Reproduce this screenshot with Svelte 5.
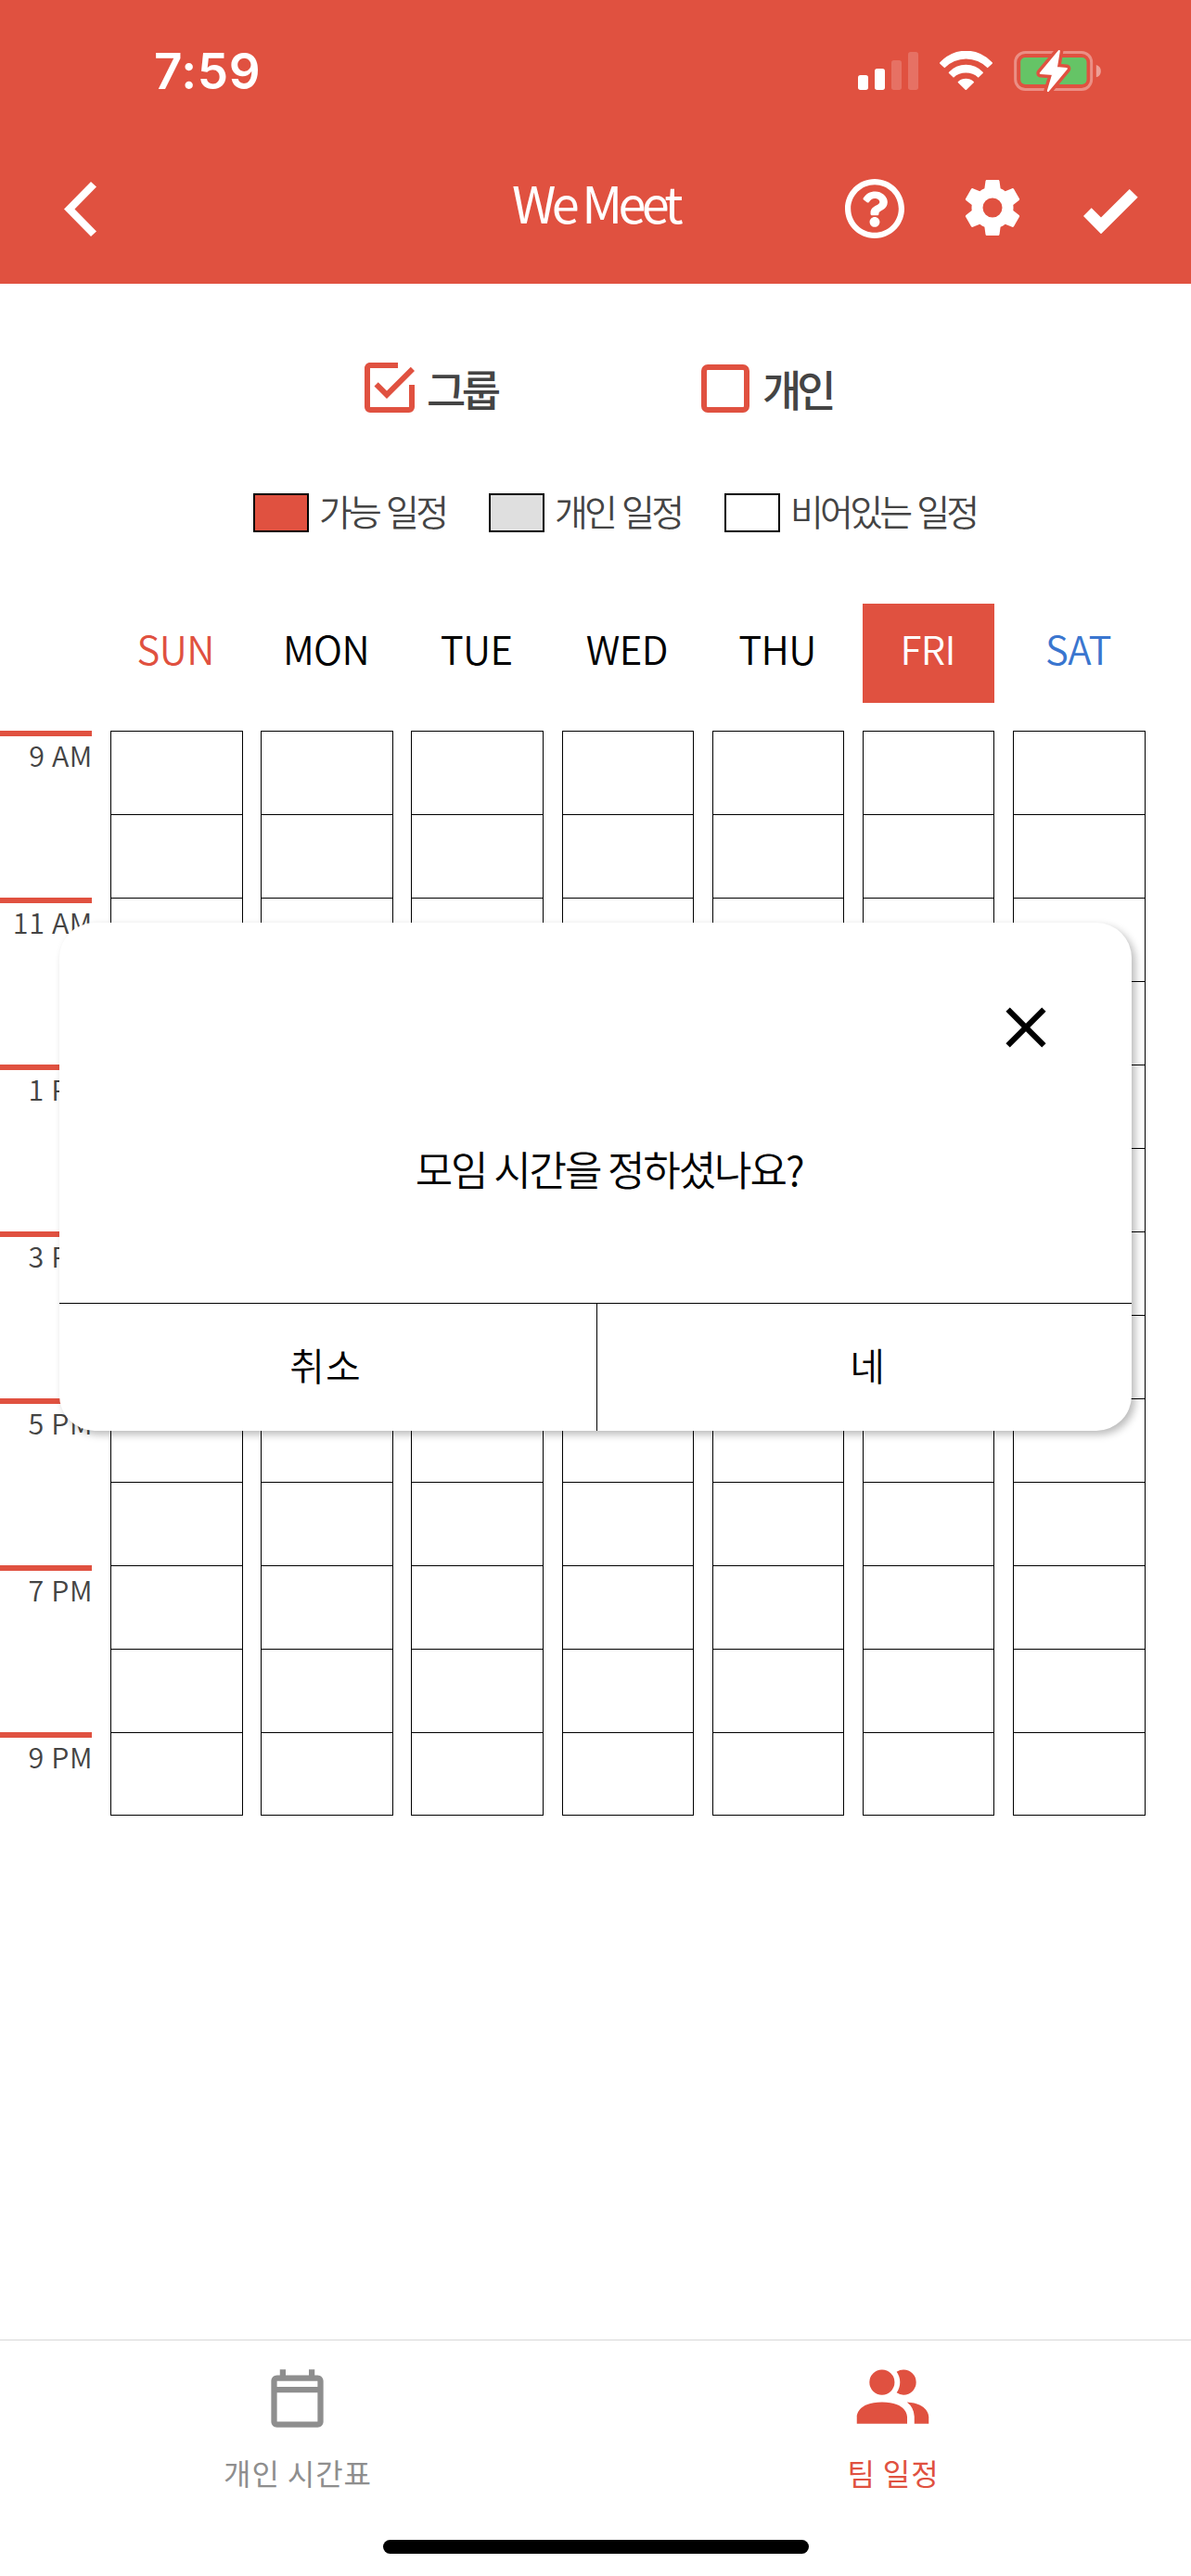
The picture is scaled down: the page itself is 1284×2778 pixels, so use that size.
<script>
  const days = [
    { name: 'SUN', tone: 'sun' },
    { name: 'MON', tone: '' },
    { name: 'TUE', tone: '' },
    { name: 'WED', tone: '' },
    { name: 'THU', tone: '' },
    { name: 'FRI', tone: 'today' },
    { name: 'SAT', tone: 'sat' }
  ];
  const hours = ['9 AM', '11 AM', '1 PM', '3 PM', '5 PM', '7 PM', '9 PM'];
  const slots = Array.from({ length: 13 }, (_, i) => i);
  const legend = [
    { label: '가능 일정', kind: 'open' },
    { label: '개인 일정', kind: 'mine' },
    { label: '비어있는 일정', kind: 'empty' }
  ];
</script>

<div class="screen">
  <header>
    <div class="status">
      <span class="clock">7:59</span>
      <div class="indicators">
        <svg class="signal" viewBox="60 45 195 123" fill="#fff">
          <rect x="60" y="120" width="33" height="48" rx="8" />
          <rect x="114" y="99" width="33" height="69" rx="8" />
          <rect x="168" y="72" width="33" height="96" rx="8" opacity=".19" />
          <rect x="222" y="45" width="33" height="123" rx="8" opacity=".19" />
        </svg>
        <svg class="wifi" viewBox="324 42 171 126" fill="#fff">
          <path d="M325 79A113 113 0 0 1 494 79Q496 81 494 83L479 97A97 97 0 0 0 340 97L325 83Q323 81 325 79Z" />
          <path d="M354 110A75 75 0 0 1 464 110Q466 112 464 114L449 128A60 60 0 0 0 369 128L354 114Q352 112 354 110Z" />
          <path d="M384 141A37 37 0 0 1 434 141Q436 143 434 145L411 167Q409 169 407 167L384 145Q382 143 384 141Z" />
        </svg>
        <svg class="battery" viewBox="564 39 281 135">
          <rect x="568.5" y="46.500" width="246" height="120" rx="32" fill="none" stroke="#fff" stroke-opacity=".36" stroke-width="9" />
          <path d="M830 87Q845 92 845 107T830 127Z" fill="#fff" fill-opacity=".45" />
          <rect x="585" y="63" width="214" height="87" rx="15" fill="#65c466" />
          <path d="M710 42L650 114L690 117L674 171L734 99L701 96Z" fill="#e05140" stroke="#e05140" stroke-width="27" stroke-linejoin="round" />
          <path d="M710 42L650 114L690 117L674 171L734 99L701 96Z" fill="#fff" stroke="#fff" stroke-width="6" stroke-linejoin="round" />
        </svg>
      </div>
    </div>
    <nav>
      <svg class="back" viewBox="0 0 35 59" fill="#fff"><path d="M0 29.500L29 0L35 5.500L11.500 29.500L35 53.500L29 59Z" /></svg>
      <h1>We Meet</h1>
      <div class="actions">
        <svg class="help" viewBox="8 8 496 496" fill="#fff"><path d="M256 8C119.043 8 8 119.083 8 256c0 136.997 111.043 248 248 248s248-111.003 248-248C504 119.083 392.957 8 256 8zm0 448c-110.532 0-200-89.431-200-200 0-110.495 89.472-200 200-200 110.491 0 200 89.471 200 200 0 110.530-89.431 200-200 200zm107.244-255.200c0 67.052-72.421 68.084-72.421 92.863V300c0 6.627-5.373 12-12 12h-45.647c-6.627 0-12-5.373-12-12v-8.659c0-35.745 27.100-50.034 47.579-61.516 17.561-9.845 28.324-16.541 28.324-29.579 0-17.246-21.999-28.693-39.784-28.693-23.189 0-33.894 10.977-48.942 29.969-4.057 5.120-11.460 6.071-16.666 2.124l-27.824-21.098c-5.107-3.872-6.251-11.066-2.644-16.363C184.846 131.491 214.940 112 261.794 112c49.071 0 101.450 38.304 101.450 88.800zM298 368c0 23.159-18.841 42-42 42s-42-18.841-42-42 18.841-42 42-42 42 18.841 42 42z" /></svg>
        <svg class="cog" viewBox="0 0 24 24" fill="#fff"><path d="M12,15.500A3.500,3.500 0 0,1 8.500,12A3.500,3.500 0 0,1 12,8.500A3.500,3.500 0 0,1 15.500,12A3.500,3.500 0 0,1 12,15.500M19.430,12.970C19.470,12.650 19.500,12.330 19.500,12C19.500,11.670 19.470,11.340 19.430,11L21.540,9.370C21.730,9.220 21.780,8.950 21.660,8.730L19.660,5.270C19.540,5.050 19.270,4.960 19.050,5.050L16.560,6.050C16.040,5.660 15.500,5.320 14.870,5.070L14.500,2.420C14.460,2.180 14.250,2 14,2H10C9.750,2 9.540,2.180 9.500,2.420L9.130,5.070C8.500,5.320 7.960,5.660 7.440,6.050L4.950,5.050C4.730,4.960 4.460,5.050 4.340,5.270L2.340,8.730C2.210,8.950 2.270,9.220 2.460,9.370L4.570,11C4.530,11.340 4.500,11.670 4.500,12C4.500,12.330 4.530,12.650 4.570,12.970L2.460,14.630C2.270,14.780 2.210,15.050 2.340,15.270L4.340,18.730C4.460,18.950 4.730,19.030 4.950,18.950L7.440,17.940C7.960,18.340 8.500,18.680 9.130,18.930L9.500,21.580C9.540,21.820 9.750,22 10,22H14C14.250,22 14.460,21.820 14.500,21.580L14.870,18.930C15.500,18.670 16.040,18.340 16.560,17.940L19.050,18.950C19.270,19.030 19.540,18.950 19.660,18.730L21.660,15.270C21.780,15.050 21.730,14.780 21.540,14.630L19.430,12.970Z" /></svg>
        <svg class="done" viewBox="0 0 59 48" fill="#fff"><path d="M0 29L8.700 20.300L19 30.600L49.700 0L58.700 8.800L19 48.300Z" /></svg>
      </div>
    </nav>
  </header>

  <main>
    <div class="filters">
      <div class="filter group">
        <svg viewBox="0 0 24 24" fill="#e05140"><path d="M19,19H5V5H15V3H5C3.890,3 3,3.890 3,5V19A2,2 0 0,0 5,21H19A2,2 0 0,0 21,19V11H19M7.910,10.080L6.500,11.500L11,16L21,6L19.590,4.580L11,13.170L7.910,10.080Z" /></svg>
        <span>그룹</span>
      </div>
      <div class="filter personal">
        <i></i>
        <span>개인</span>
      </div>
    </div>

    <div class="legend">
      {#each legend as item}
        <div class="key"><i class={item.kind}></i><span>{item.label}</span></div>
      {/each}
    </div>

    <div class="days">
      {#each days as day}
        <div class="day {day.tone}">{day.name}</div>
      {/each}
    </div>

    <div class="schedule">
      <div class="hours">
        {#each hours as hour}
          <div class="hour"><span>{hour}</span></div>
        {/each}
      </div>
      <div class="columns">
        {#each days as day (day.name)}
          <div class="column">
            {#each slots as slot (slot)}<div class="slot"></div>{/each}
          </div>
        {/each}
      </div>
    </div>
  </main>

  <footer>
    <div class="tab">
      <div class="icon">
        <svg class="calendar" viewBox="0 0 24 24" fill="#8e8e8e"><path d="M19 3h-1V1h-2v2H8V1H6v2H5c-1.100 0-2 .9-2 2v14c0 1.100.9 2 2 2h14c1.100 0 2-.9 2-2V5c0-1.100-.9-2-2-2zm0 16H5V9h14v10zm0-12H5V5h14v2z" /></svg>
      </div>
      <span>개인 시간표</span>
    </div>
    <div class="tab active">
      <div class="icon">
        <svg class="people" viewBox="0 0 24 24" fill="#e05140"><path d="M16 17V19H2V17S2 13 9 13 16 17 16 17M12.500 7.500A3.500 3.500 0 1 0 9 11A3.500 3.500 0 0 0 12.500 7.500M15.940 13A5.320 5.320 0 0 1 18 17V19H22V17S22 13.370 15.940 13M15 4A3.390 3.390 0 0 0 13.070 4.590A5 5 0 0 1 13.070 10.410A3.390 3.390 0 0 0 15 11A3.500 3.500 0 0 0 15 4Z" /></svg>
      </div>
      <span>팀 일정</span>
    </div>
  </footer>
  <div class="home"></div>

  <div class="modal">
    <div class="body">
      <svg class="close" viewBox="0 0 24 24"><path d="M19,6.410L17.590,5L12,10.590L6.410,5L5,6.410L10.590,12L5,17.590L6.410,19L12,13.410L17.590,19L19,17.590L13.410,12L19,6.410Z" /></svg>
      <p>모임 시간을 정하셨나요?</p>
    </div>
    <div class="buttons">
      <button>취소</button>
      <button>네</button>
    </div>
  </div>
</div>

<style>
  :global(body) { background: #fff; }
  .screen {
    position: relative;
    display: flex;
    flex-direction: column;
    width: 1284px;
    height: 2778px;
    overflow: hidden;
    background: #fff;
    color: #000;
    font-family: 'Noto Sans CJK KR', sans-serif;
    box-sizing: border-box;
  }
  .screen :global(*) { box-sizing: border-box; }
  svg { display: block; flex: none; }
  span, h1, p { white-space: nowrap; }

  header { height: 306px; flex: none; background: #e05140; color: #fff; }
  .status {
    display: flex;
    justify-content: space-between;
    align-items: center;
    height: 144px;
    padding: 8px 97px 0 166px;
  }
  .clock { padding-top: 1px; font: 600 53px/60px Inter, sans-serif; letter-spacing: 0.6px; }
  .indicators { display: flex; align-items: center; gap: 23px; }
  .signal { width: 65px; height: 41px; }
  .wifi { width: 57px; height: 42px; }
  .battery { width: 94px; height: 45px; }
  nav {
    display: grid;
    grid-template-columns: 1fr auto 1fr;
    align-items: center;
    height: 162px;
    padding: 0 57px 0 69px;
  }
  .back { width: 35px; height: 59px; }
  h1 {
    margin: 0 12px 0 0;
    padding-bottom: 14px;
    font-size: 54px;
    font-weight: 400;
    line-height: 60px;
    letter-spacing: -4.7px;
  }
  .actions { display: flex; align-items: center; justify-content: flex-end; }
  .help { width: 64px; height: 64px; margin-right: 59px; }
  .cog { width: 72px; height: 72px; margin: 0 62px 2px 0; }
  .done { width: 59px; height: 48px; margin-top: 6px; }

  main { flex: 1; }
  .filters { display: flex; height: 72px; margin-top: 76px; padding-left: 384px; }
  .filter {
    display: flex;
    align-items: center;
    width: 372px;
    color: #444;
    font-size: 46px;
    font-weight: 500;
    letter-spacing: -4.5px;
    line-height: 70px;
  }
  .filter svg { width: 72px; height: 72px; margin-right: 4px; }
  .filter i { width: 52px; height: 52px; margin: 2px 14px 0 0; border: 6px solid #e05140; border-radius: 7px; }
  .personal { letter-spacing: -5px; }

  .legend { display: flex; height: 42px; margin-top: 78px; padding-left: 273px; }
  .key { display: flex; align-items: center; width: 254px; }
  .key i { width: 60px; height: 42px; margin-right: 11px; border: 2px solid #000; flex: none; }
  .key span { padding-bottom: 6px; color: #444; font-size: 39px; font-weight: 350; line-height: 42px; letter-spacing: -3.8px; word-spacing: 3px; }
  .open { background: #e05140; }
  .mine { background: #dfdfdf; }

  .days { display: grid; grid-template-columns: repeat(7, 142.6px); gap: 19.6px; margin-top: 77px; padding-left: 118.95px; }
  .day { height: 107px; padding-right: 2px; font-size: 42px; font-weight: 350; line-height: 95px; letter-spacing: -0.6px; text-align: center; }
  .sun { color: #e05140; }
  .sat { color: #3a76cf; }
  .today { background: #e05140; color: #fff; }

  .schedule { display: flex; margin-top: 30px; }
  .hours { width: 99px; margin-right: 19.95px; }
  .hour {
    display: flex;
    justify-content: flex-end;
    height: 180px;
    border-top: 6px solid #e05140;
    color: #444;
  }
  .hour:last-child { height: 90px; }
  .hour span { font-size: 30.5px; font-weight: 330; line-height: 40px; letter-spacing: 0.6px; margin-right: -1px; }
  .columns { display: grid; grid-template-columns: repeat(7, 142.6px); gap: 19.6px; }
  .column { height: 1170px; border: 1px solid #000; border-top: 0; }
  .slot { height: 90px; border-top: 1px solid #000; }

  footer { display: flex; flex: none; height: 216px; border-top: 1px solid #d8d8d8; }
  .tab {
    display: flex;
    flex-direction: column;
    align-items: center;
    width: 50%;
    color: #8e8e8e;
    font-size: 32px;
    line-height: 38px;
    letter-spacing: 0.9px;
  }
  .icon { display: flex; justify-content: center; align-items: flex-start; height: 123px; margin-right: 2px; }
  .calendar { width: 75px; height: 75px; margin-top: 28px; }
  .people { width: 93px; height: 93px; margin-top: 16px; }
  .active { color: #e05140; font-weight: 430; }
  .home { width: 459px; height: 15px; margin: 0 auto 24px; border-radius: 8px; background: #000; flex: none; }

  .modal {
    position: absolute;
    left: 64px;
    top: 995px;
    display: flex;
    flex-direction: column;
    width: 1156px;
    height: 548px;
    border-radius: 38px;
    background: #fff;
    box-shadow: 4px 4px 9px rgba(0, 0, 0, 0.27);
  }
  .body { display: flex; flex-direction: column; height: 410px; }
  .close { width: 74px; height: 74px; margin: 76px 77px 0 0; align-self: flex-end; }
  p {
    margin: 85px 0 0 29px;
    align-self: center;
    font-size: 44px;
    font-weight: 350;
    line-height: 60px;
    letter-spacing: -2.1px;
  }
  .buttons { display: grid; grid-template-columns: 580px 1fr; height: 138px; border-top: 1px solid #000; }
  button {
    padding: 0 0 7px;
    border: 0;
    background: none;
    color: #000;
    font-family: inherit;
    font-size: 41px;
    font-weight: 350;
    letter-spacing: 1px;
  }
  button:first-child { padding-right: 5px; border-right: 1px solid #000; }
  button:last-child { padding-left: 7px; }
</style>
